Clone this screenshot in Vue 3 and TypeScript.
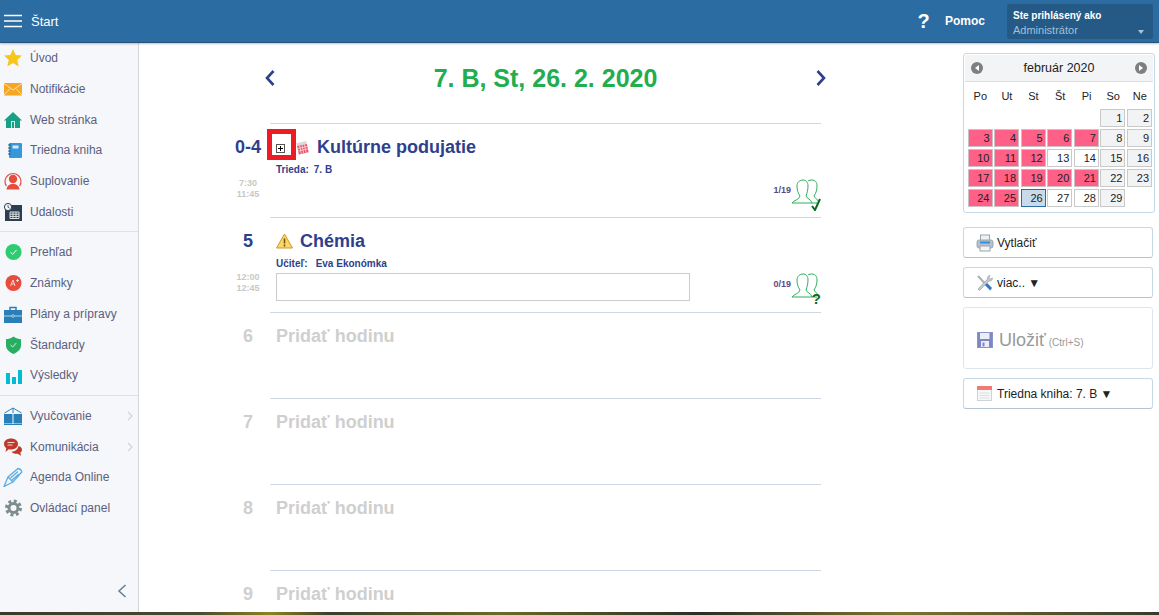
<script setup lang="ts">
import { ref } from 'vue'

interface NavItem {
  label: string
  icon: string
  arrow?: boolean
}

const navGroups: NavItem[][] = [
  [
    { label: 'Úvod', icon: 'star' },
    { label: 'Notifikácie', icon: 'mail' },
    { label: 'Web stránka', icon: 'home' },
    { label: 'Triedna kniha', icon: 'book' },
    { label: 'Suplovanie', icon: 'person' },
    { label: 'Udalosti', icon: 'calendar' },
  ],
  [
    { label: 'Prehľad', icon: 'check' },
    { label: 'Známky', icon: 'grade' },
    { label: 'Plány a prípravy', icon: 'case' },
    { label: 'Štandardy', icon: 'shield' },
    { label: 'Výsledky', icon: 'bars' },
  ],
  [
    { label: 'Vyučovanie', icon: 'open', arrow: true },
    { label: 'Komunikácia', icon: 'chat', arrow: true },
    { label: 'Agenda Online', icon: 'pen' },
    { label: 'Ovládací panel', icon: 'gear' },
  ],
]

const emptySlots = ['6', '7', '8', '9']

const dayNames = ['Po', 'Ut', 'St', 'Št', 'Pi', 'So', 'Ne']
const selectedDay = ref(26)
const pinkDays = [3, 4, 5, 6, 7, 10, 11, 12, 17, 18, 19, 20, 21, 24, 25]
const weekendDays = [1, 2, 8, 9, 15, 16, 22, 23, 29]
const days = Array.from({ length: 29 }, (_, i) => i + 1)

function dayClass(day: number) {
  return {
    pink: pinkDays.includes(day),
    weekend: weekendDays.includes(day),
    selected: day === selectedDay.value,
  }
}
</script>

<template>
  <div class="page">
    <header class="topbar">
      <svg class="burger" width="18" height="14" viewBox="0 0 18 14">
        <path d="M0 1.500h18M0 7h18M0 12.500h18" stroke="#fff" stroke-width="1.600" />
      </svg>
      <span class="topbar-title">Štart</span>
      <div class="help"><span class="help-mark">?</span><span>Pomoc</span></div>
      <div class="user-box">
        <div class="user-top">Ste prihlásený ako</div>
        <div class="user-role">Administrátor</div>
        <span class="user-caret"></span>
      </div>
    </header>

    <div class="shell">
      <aside class="sidebar">
        <div v-for="(group, g) in navGroups" :key="g" class="nav-group">
          <a v-for="item in group" :key="item.label" class="nav-item">
            <svg class="nav-icon" width="20" height="20" viewBox="0 0 20 20">
              <polygon
                v-if="item.icon === 'star'"
                points="10,1 12.7,7 19,7.6 14.2,12 15.7,18.6 10,15.1 4.3,18.6 5.8,12 1,7.6 7.3,7"
                fill="#f7c61b"
              />
              <template v-else-if="item.icon === 'mail'">
                <rect x="1" y="4" width="18" height="12.500" fill="#f5a623" />
                <path d="M1 4.500 10 11l9-6.500M1 16l6-6.500M19 16l-6-6.500" fill="none" stroke="#fde3b0" stroke-width="1" />
              </template>
              <template v-else-if="item.icon === 'home'">
                <path d="M10 2 19 10.500h-2V18H3v-7.500H1z" fill="#16a085" />
                <rect x="8" y="11" width="4" height="7" fill="#d5efe9" />
                <rect x="9" y="12" width="2" height="6" fill="#16a085" />
              </template>
              <template v-else-if="item.icon === 'book'">
                <rect x="6" y="3" width="13" height="15" rx="1" fill="#3498db" />
                <rect x="9.500" y="5.500" width="6" height="3" fill="#d6eaf8" />
                <path d="M5 5h3M5 8h3M5 11h3M5 14h3" stroke="#1f5f8b" stroke-width="1" />
              </template>
              <template v-else-if="item.icon === 'person'">
                <path d="M3.400 15a8 8 0 1 1 13.200 0" fill="none" stroke="#e74c3c" stroke-width="1.200" />
                <circle cx="10" cy="8" r="4.200" fill="#e74c3c" />
                <path d="M3.500 18.500c.4-4 3-5 5-5.600h3c2 .6 4.600 1.600 5 5.600z" fill="#e74c3c" />
              </template>
              <template v-else-if="item.icon === 'calendar'">
                <rect x="2" y="3" width="17" height="16" fill="#2c3e50" />
                <path d="M7 10h9v6.500H7zM7 12.200h9M7 14.400h9M10 10v6.500M13 10v6.500" fill="none" stroke="#ecf0f1" stroke-width=".9" />
                <circle cx="5" cy="5" r="3.600" fill="#f5f7fa" stroke="#2c3e50" stroke-width="1" />
                <path d="M5 3v2.200l1.500 1" fill="none" stroke="#2c3e50" stroke-width=".8" />
              </template>
              <template v-else-if="item.icon === 'check'">
                <circle cx="10.500" cy="10" r="8" fill="#2ecc71" />
                <path d="M7.500 10.200 9.700 12.300 13.500 8" fill="none" stroke="#fff" stroke-width="1" />
              </template>
              <template v-else-if="item.icon === 'grade'">
                <circle cx="10.500" cy="10" r="8" fill="#e74c3c" />
                <path d="M7.500 13 10 7l2 6M8.500 11h2.800M13 7.500h3M14.500 6v3" fill="none" stroke="#fbd5d0" stroke-width="1" />
              </template>
              <template v-else-if="item.icon === 'case'">
                <rect x="1" y="6" width="18" height="13" fill="#2980b9" />
                <path d="M7 6V3.500h6V6" fill="none" stroke="#2980b9" stroke-width="1.500" />
                <path d="M1 12h18" stroke="#d6eaf8" stroke-width=".8" />
                <circle cx="10" cy="12" r="1.300" fill="#2980b9" stroke="#d6eaf8" stroke-width=".7" />
              </template>
              <template v-else-if="item.icon === 'shield'">
                <path d="M10.500 1.500c2.500 1.800 5 2.500 7.500 2.700v6.300c0 4-3.500 6.800-7.500 8.500-4-1.700-7.500-4.500-7.500-8.500V4.200c2.500-.2 5-.9 7.500-2.700z" fill="#27ae60" />
                <path d="M7.500 10 9.700 12 13.300 8" fill="none" stroke="#d5f5e3" stroke-width="1" />
              </template>
              <template v-else-if="item.icon === 'bars'">
                <rect x="3" y="8" width="4" height="11" fill="#00bcd4" />
                <rect x="9" y="12" width="4" height="7" fill="#00bcd4" />
                <rect x="15" y="5" width="4" height="14" fill="#00bcd4" />
              </template>
              <template v-else-if="item.icon === 'open'">
                <path d="M1 8h8.500v9.500H1zM10.500 8H19v9.500h-8.500z" fill="#2980b9" />
                <path d="M1.500 7 10 2l8.500 5M10 2v5M1 18.500h18" fill="none" stroke="#2980b9" stroke-width="1" />
              </template>
              <template v-else-if="item.icon === 'chat'">
                <path d="M8 1.500c4 0 7 2.200 7 5.500s-3 5.500-7 5.500c-.8 0-1.500 0-2.200-.2L2.500 15l.8-3.800C1.800 10 1 8.600 1 7c0-3.300 3-5.500 7-5.500z" fill="#c0392b" />
                <path d="M4.500 5.500h7M4.500 8h5" stroke="#f9d5d0" stroke-width="1" />
                <path d="M15.500 9c2.200.6 3.500 2 3.500 3.700 0 1.200-.6 2.200-1.700 3l.9 3-3.600-2c-2.500.2-5-.5-6-2 3.500-.1 6.400-2.300 6.900-5.700z" fill="#c0392b" />
              </template>
              <template v-else-if="item.icon === 'pen'">
                <path d="M1 19.500 5 10 15 1.500c2 .3 3.500 1.800 3.800 3.500L10 15zM5 10l5 5M7.500 11 15 4.500M9 13l7-6" fill="none" stroke="#5dade2" stroke-width="1.300" />
              </template>
              <template v-else-if="item.icon === 'gear'">
                <circle cx="10.500" cy="10" r="4.500" fill="none" stroke="#7f8c8d" stroke-width="3" />
                <circle cx="10.500" cy="10" r="7" fill="none" stroke="#7f8c8d" stroke-width="3" stroke-dasharray="3 2.500" />
              </template>
            </svg>
            <span class="nav-label">{{ item.label }}</span>
            <svg v-if="item.arrow" class="nav-arrow" width="6" height="10" viewBox="0 0 6 10">
              <path d="M1 1l4 4-4 4" fill="none" stroke="#d0d3d8" stroke-width="1.200" />
            </svg>
          </a>
        </div>
        <svg class="collapse" width="10" height="14" viewBox="0 0 10 14">
          <path d="M8.500 1 2 7l6.500 6" fill="none" stroke="#5f7f9a" stroke-width="1.500" />
        </svg>
      </aside>

      <main class="content">
        <section class="day">
          <div class="day-head">
            <svg width="12" height="18" viewBox="0 0 12 18">
              <path d="M9.500 2 3 9l6.500 7" fill="none" stroke="#2e3f8c" stroke-width="2.600" />
            </svg>
            <h1>7. B, St, 26. 2. 2020</h1>
            <svg width="12" height="18" viewBox="0 0 12 18">
              <path d="M2.500 2 9 9l-6.500 7" fill="none" stroke="#2e3f8c" stroke-width="2.600" />
            </svg>
          </div>

          <div class="lesson lesson-first">
            <div class="slot">
              <div class="slot-no">0-4</div>
              <div class="slot-time">7:30<br />11:45</div>
            </div>
            <div class="lesson-body">
              <div class="lesson-title">
                <span class="expander">
                  <svg width="9" height="9" viewBox="0 0 9 9">
                    <rect x=".5" y=".5" width="8" height="8" fill="#fff" stroke="#555" />
                    <path d="M2 4.500h5M4.500 2v5" stroke="#000" />
                  </svg>
                </span>
                <svg class="event-icon" width="13" height="15" viewBox="0 0 13 15">
                  <g transform="rotate(-12 6.500 7.500)">
                    <rect x="1.500" y="2" width="10" height="3" fill="#d9d9d9" />
                    <rect x="1.500" y="5" width="10" height="8.500" fill="#e8546a" />
                    <path d="M1.500 7.500h10M1.500 10h10M4 5v8.500M6.500 5v8.500M9 5v8.500" stroke="#f7d5da" stroke-width=".8" />
                  </g>
                </svg>
                <span>Kultúrne podujatie</span>
              </div>
              <div class="lesson-meta"><b>Trieda:</b><span>7. B</span></div>
              <div class="attendance">
                <span class="attendance-count">1/19</span>
                <svg width="30" height="32" viewBox="0 0 30 32">
                  <path d="M1 24C3 21 8 21 9 17 7 14 6 11 6 7c0-4 3-6 6-6s5 2 5 6c0 4-1 7-2 10 1 3 5 3 6 7z" fill="#fff" stroke="#2fae5d" stroke-width="1" />
                  <path d="M17 2c1-1 3-1 4-1 3 0 5 2 5 6 0 4-1 7-3 10 1 2 3 3 5 6M21 24h5" fill="none" stroke="#2fae5d" stroke-width="1" />
                  <path d="M21 27l3 4 5-11" fill="none" stroke="#0a6a1a" stroke-width="2" />
                </svg>
              </div>
            </div>
          </div>

          <div class="lesson lesson-second">
            <div class="slot">
              <div class="slot-no">5</div>
              <div class="slot-time">12:00<br />12:45</div>
            </div>
            <div class="lesson-body">
              <div class="lesson-title indent">
                <svg class="warn-icon" width="17" height="16" viewBox="0 0 17 16">
                  <path d="M8.500 1 16.500 15H.5z" fill="#f9d667" stroke="#c99a2e" stroke-width="1" stroke-linejoin="round" />
                  <path d="M8.500 5.500v5M8.500 11.500v2" stroke="#6b4e0a" stroke-width="1.500" />
                </svg>
                <span>Chémia</span>
              </div>
              <div class="lesson-meta"><b>Učiteľ:</b><span>Eva Ekonómka</span></div>
              <div class="note-box"></div>
              <div class="attendance">
                <span class="attendance-count">0/19</span>
                <svg width="30" height="32" viewBox="0 0 30 32">
                  <path d="M1 24C3 21 8 21 9 17 7 14 6 11 6 7c0-4 3-6 6-6s5 2 5 6c0 4-1 7-2 10 1 3 5 3 6 7z" fill="#fff" stroke="#2fae5d" stroke-width="1" />
                  <path d="M17 2c1-1 3-1 4-1 3 0 5 2 5 6 0 4-1 7-3 10 1 2 3 3 5 6M21 24h5" fill="none" stroke="#2fae5d" stroke-width="1" />
                </svg>
                <b class="question">?</b>
              </div>
            </div>
          </div>

          <div v-for="slot in emptySlots" :key="slot" class="lesson lesson-empty">
            <div class="slot">
              <div class="slot-no">{{ slot }}</div>
            </div>
            <div class="lesson-body">
              <div class="lesson-title">Pridať hodinu</div>
            </div>
          </div>
        </section>

        <aside class="rail">
          <div class="calendar">
            <div class="cal-head">
              <span class="cal-nav"><i class="tri-left"></i></span>
              <span>február 2020</span>
              <span class="cal-nav"><i class="tri-right"></i></span>
            </div>
            <div class="cal-names">
              <span v-for="name in dayNames" :key="name">{{ name }}</span>
            </div>
            <div class="cal-days">
              <span
                v-for="day in days"
                :key="day"
                class="cal-day"
                :class="dayClass(day)"
              >{{ day }}</span>
            </div>
          </div>

          <button class="rail-btn">
            <svg width="18" height="18" viewBox="0 0 18 18">
              <rect x="4.500" y="1" width="9" height="6" fill="#eef1f4" stroke="#9aa4ad" />
              <rect x="1" y="6" width="16" height="8" rx="2" fill="#b9c2ca" stroke="#8e99a3" stroke-width=".8" />
              <rect x="4" y="7.500" width="10" height="2" fill="#2f8fe0" />
              <rect x="4" y="12" width="10" height="5" fill="#f2f4f6" stroke="#9aa4ad" />
            </svg>
            <span>Vytlačiť</span>
          </button>
          <button class="rail-btn">
            <svg width="18" height="18" viewBox="0 0 18 18">
              <path d="M2 2l13 14" stroke="#a9b0b6" stroke-width="2" />
              <path d="M10 10l5 5" stroke="#2f78c4" stroke-width="3" />
              <path d="M14 1.500c-2 0-3 2-2.500 3.500L2 15l1.500 1.500 9.500-9.500c2 .5 3.500-1 3.500-3l-2 1-1.500-1.500z" fill="#c3c9ce" stroke="#8e99a3" stroke-width=".6" />
            </svg>
            <span>viac.. ▼</span>
          </button>
          <button class="rail-btn save-btn">
            <svg width="18" height="16" viewBox="0 0 18 16">
              <rect x="1.500" y=".5" width="15" height="15" fill="#7e86c4" stroke="#8c93c9" />
              <rect x="4" y="1" width="9.500" height="6" fill="#eceef6" />
              <rect x="5" y="9" width="8" height="6" fill="#eceef6" />
              <rect x="6.500" y="10.500" width="2" height="4" fill="#7e86c4" />
            </svg>
            <span class="save-label">Uložiť</span>
            <span class="save-hint">(Ctrl+S)</span>
          </button>
          <button class="rail-btn">
            <svg width="18" height="15" viewBox="0 0 18 15">
              <rect x="1.500" y=".5" width="14" height="14" fill="#f6f7f8" stroke="#cfd3d7" />
              <rect x="1" y="0" width="15" height="4" fill="#ef7b74" />
              <path d="M3.500 7h10M3.500 9.500h10M3.500 12h10" stroke="#d5d9dd" stroke-width=".8" />
            </svg>
            <span>Triedna kniha: 7. B ▼</span>
          </button>
        </aside>
      </main>
    </div>

    <div class="photo-strip"></div>
  </div>
</template>

<style scoped>
.page {
  height: 615px;
  display: flex;
  flex-direction: column;
  font-family: "Liberation Sans", Arial, sans-serif;
  overflow: hidden;
}

.topbar {
  height: 43px;
  flex: none;
  display: flex;
  align-items: center;
  background: #2b6ca3;
  border-bottom: 1px solid #25527a;
  box-shadow: 0 1px 2px rgba(0, 0, 0, 0.25);
  box-sizing: border-box;
  color: #fff;
  position: relative;
  z-index: 2;
}

.burger {
  margin-left: 4px;
}

.topbar-title {
  margin-left: 9px;
  font-size: 13px;
}

.help {
  margin-left: auto;
  display: flex;
  align-items: center;
  font-size: 12px;
  font-weight: 700;
}

.help-mark {
  font-size: 20px;
  width: 21px;
  margin-right: 11px;
  text-align: center;
}

.user-box {
  position: relative;
  width: 146px;
  height: 35px;
  margin: 0 6px 0 22px;
  background: #245a85;
  border-radius: 2px;
  box-sizing: border-box;
  padding: 5px 6px;
}

.user-top {
  font-size: 10px;
  font-weight: 700;
  line-height: 13px;
}

.user-role {
  font-size: 11px;
  line-height: 13px;
  margin-top: 2px;
  color: #9fc0de;
}

.user-caret {
  position: absolute;
  right: 9px;
  top: 26px;
  border: 3.500px solid transparent;
  border-top: 4px solid #a9c3da;
  border-bottom: 0;
}

.shell {
  flex: 1;
  min-height: 0;
  display: flex;
}

.sidebar {
  width: 139px;
  flex: none;
  box-sizing: border-box;
  background: #f5f7fa;
  border-right: 1px solid #d6d8db;
  position: relative;
}

.nav-group {
  padding: 5px 0 4px;
  border-bottom: 1px solid #dfe1e4;
}

.nav-group:first-child {
  padding-top: 0;
}

.nav-group:last-of-type {
  border-bottom: 0;
}

.nav-item {
  height: 30.700px;
  display: flex;
  align-items: center;
  padding-left: 3px;
  color: #5a6080;
  font-size: 12px;
}

.nav-icon {
  flex: none;
  margin-right: 7px;
}

.nav-arrow {
  margin-left: auto;
  margin-right: 5px;
}

.collapse {
  position: absolute;
  right: 11px;
  bottom: 14px;
}

.content {
  flex: 1;
  display: flex;
  min-width: 0;
}

.day {
  width: 824px;
  flex: none;
  box-sizing: border-box;
  padding: 0 142px 0 91px;
}

.day-head {
  display: flex;
  align-items: center;
  justify-content: space-between;
  height: 70px;
  padding-bottom: 10px;
  margin: 0 -6px 0 34px;
  position: relative;
}

/* the rule stops at the lesson column while the arrows hang past it */
.day-head::after {
  content: "";
  position: absolute;
  left: 6px;
  right: 6px;
  bottom: -1px;
  border-bottom: 1px solid #cdd8e3;
}

.day-head h1 {
  margin: 0;
  font-size: 25px;
  font-weight: 700;
  color: #22ad4e;
}

.lesson {
  display: flex;
  height: 86px;
}

.lesson-first {
  height: 94px;
  margin-top: 1px;
}

.lesson-second {
  height: 95px;
}

.slot {
  width: 36px;
  margin-right: 4px;
  flex: none;
  text-align: center;
  padding-top: 13px;
}

.slot-no {
  font-size: 18px;
  font-weight: 700;
  line-height: 20px;
  color: #2e3f8c;
}

.slot-time {
  margin-top: 21px;
  font-size: 9px;
  font-weight: 700;
  line-height: 11px;
  color: #c8c8c8;
}

.lesson-body {
  flex: 1;
  position: relative;
  border-bottom: 1px solid #cdd8e3;
  min-width: 0;
}

.lesson-title {
  display: flex;
  align-items: center;
  height: 24px;
  margin-top: 11px;
  font-size: 18px;
  font-weight: 700;
  color: #2e3f8c;
}

.lesson-empty .slot-no {
  color: #cfcfcf;
}

.lesson-empty .lesson-title {
  color: #cfcfcf;
  margin-left: 6px;
}

.expander {
  width: 9px;
  height: 9px;
  margin-left: 6px;
  position: relative;
  display: flex;
  margin-top: 3px;
}

/* the red frame is an annotation lying over the row */
.expander::after {
  content: "";
  position: absolute;
  left: -9.500px;
  top: -15px;
  width: 19px;
  height: 21px;
  border: 5px solid #ed1c24;
}

.event-icon {
  margin: 0 8px 0 11px;
}

.indent {
  margin-left: 6px;
}

.warn-icon {
  margin-right: 7px;
}

.lesson-meta {
  margin: 5px 0 0 6px;
  display: flex;
  gap: 5px;
  font-size: 10px;
  line-height: 11px;
  font-weight: 700;
  color: #2e3f8c;
}

.lesson-second .lesson-meta {
  gap: 8px;
}

.note-box {
  margin: 4px 0 0 6px;
  width: 414px;
  height: 28px;
  box-sizing: border-box;
  border: 1px solid #ccc;
}

.attendance {
  position: absolute;
  right: 0;
  top: 55px;
  display: flex;
  align-items: flex-start;
  font-size: 9px;
  font-weight: 700;
  color: #5a4a80;
}

.attendance-count {
  margin-top: 6px;
}

.question {
  position: absolute;
  right: 0;
  bottom: 0;
  font-size: 15px;
  line-height: 13px;
  color: #0a6a1a;
}

.rail {
  width: 190px;
  flex: none;
  padding-top: 10px;
  display: flex;
  flex-direction: column;
}

.calendar {
  width: 192px;
  height: 160px;
  box-sizing: border-box;
  border: 1px solid #c5d9e8;
  border-radius: 3px;
  padding: 1px;
  color: #222;
  background: #fff;
  flex: none;
}

.cal-head {
  height: 26px;
  display: flex;
  align-items: center;
  justify-content: space-between;
  padding: 0 6px;
  background: #f3f4f6;
  border-bottom: 1px solid #d5e1ea;
  font-size: 12.500px;
}

.cal-nav {
  width: 12px;
  height: 12px;
  border-radius: 50%;
  background: #7f7f7f;
  display: flex;
  align-items: center;
  justify-content: center;
}

.tri-left,
.tri-right {
  border: 3px solid transparent;
}

.tri-left {
  border-right: 4px solid #fff;
  border-left: 0;
}

.tri-right {
  border-left: 4px solid #fff;
  border-right: 0;
}

.cal-names {
  display: grid;
  grid-template-columns: repeat(7, 26.600px);
  padding-left: 2px;
  height: 27px;
  align-items: center;
  font-size: 11px;
  text-align: center;
}

.cal-days {
  display: grid;
  grid-template-columns: repeat(7, 25px);
  grid-auto-rows: 18px;
  column-gap: 1.600px;
  row-gap: 2px;
  padding-left: 2.500px;
}

.cal-day {
  box-sizing: border-box;
  border: 1px solid #c9c9c9;
  font-size: 11px;
  line-height: 16px;
  text-align: right;
  padding-right: 2px;
  background: #fff;
}

.cal-day:first-child {
  grid-column-start: 6;
}

.cal-day.weekend {
  background: #f2f3f5;
}

.cal-day.pink {
  background: #ff6088;
  border-color: #cdbfc3;
}

.cal-day.selected {
  background: #c9dbea;
  border-color: #2b6ca3;
}

.rail-btn {
  width: 190px;
  height: 31px;
  flex: none;
  margin-top: 9px;
  padding: 0 0 0 12px;
  display: flex;
  align-items: center;
  gap: 3px;
  box-sizing: border-box;
  background: #fff;
  border: 1px solid #c5d9e8;
  border-bottom-color: #b3c5d3;
  border-radius: 3px;
  font-family: inherit;
  font-size: 12px;
  color: #222;
  text-align: left;
}

.calendar + .rail-btn {
  margin-top: 14px;
}

.save-btn {
  height: 62px;
  padding-top: 4px;
  border-color: #dde6ee;
  color: #999;
}

.save-label {
  font-size: 18px;
  margin-left: 2px;
}

.save-hint {
  font-size: 10px;
  margin-top: 4px;
}

.photo-strip {
  height: 3px;
  flex: none;
  background: linear-gradient(90deg, #3a3a2c 0, #4a4a30 200px, #8a8420 270px, #3d3d2a 330px, #6a6a28 500px, #2c2c24 700px, #7a7430 900px, #3a3a2c 1159px);
}
</style>

<style>
html,
body {
  margin: 0;
  overflow: hidden;
  background: #fff;
}
</style>
